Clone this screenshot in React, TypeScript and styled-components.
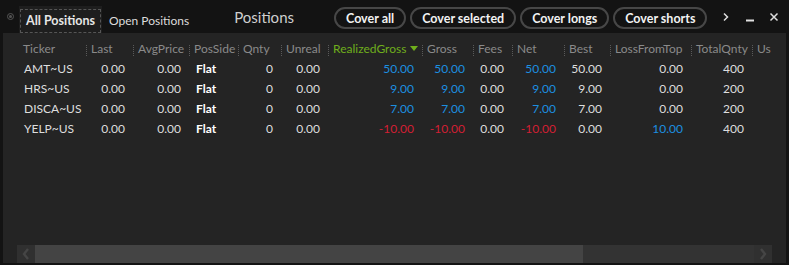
import styled, { createGlobalStyle } from 'styled-components';

const GlobalStyle = createGlobalStyle`
  html, body {
    margin: 0;
    padding: 0;
    background: #131313;
    overflow: hidden;
  }
  body {
    font-family: Lato, 'Liberation Sans', sans-serif;
  }
`;

const cols = [
  { key: 'ticker', label: 'Ticker', width: 69, align: 'left' },
  { key: 'last', label: 'Last', width: 47 },
  { key: 'avg', label: 'AvgPrice', width: 56 },
  { key: 'side', label: 'PosSide', width: 49, align: 'left' },
  { key: 'qnty', label: 'Qnty', width: 43 },
  { key: 'unreal', label: 'Unreal', width: 47 },
  { key: 'rg', label: 'RealizedGross', width: 94, sorted: true },
  { key: 'gross', label: 'Gross', width: 51 },
  { key: 'fees', label: 'Fees', width: 39 },
  { key: 'net', label: 'Net', width: 52 },
  { key: 'best', label: 'Best', width: 46 },
  { key: 'lft', label: 'LossFromTop', width: 81 },
  { key: 'tq', label: 'TotalQnty', width: 61 },
  { key: 'us', label: 'Us', width: 40 },
];

const rows = [
  { ticker: 'AMT~US', rg: '50.00', gross: '50.00', net: '50.00', best: '50.00', lft: '0.00', tq: '400' },
  { ticker: 'HRS~US', rg: '9.00', gross: '9.00', net: '9.00', best: '9.00', lft: '0.00', tq: '200' },
  { ticker: 'DISCA~US', rg: '7.00', gross: '7.00', net: '7.00', best: '7.00', lft: '0.00', tq: '200' },
  { ticker: 'YELP~US', rg: '-10.00', gross: '-10.00', net: '-10.00', best: '0.00', lft: '10.00', tq: '400' },
];

const gridTemplate = cols.map((c) => `${c.width}px`).join(' ');

function tone(v: string) {
  if (v.startsWith('-')) return 'neg';
  if (parseFloat(v) > 0) return 'pos';
  return 'plain';
}

export default function App() {
  return (
    <Window>
      <GlobalStyle />
      <TopBar>
        <Grip />
        <Tab $active>
          <TabLabel $active>All Positions</TabLabel>
        </Tab>
        <Tab>
          <TabLabel>Open Positions</TabLabel>
        </Tab>
        <Title>Positions</Title>
        <Buttons>
          <PillButton>Cover all</PillButton>
          <PillButton>Cover selected</PillButton>
          <PillButton>Cover longs</PillButton>
          <PillButton>Cover shorts</PillButton>
        </Buttons>
        <Controls>
          <Ctrl>
            <svg width="10" height="10" viewBox="0 0 10 10">
              <path d="M3 1.5 L6.5 5 L3 8.5" stroke="#ddd" strokeWidth="1.5" fill="none" />
            </svg>
          </Ctrl>
          <Ctrl>
            <svg width="10" height="10" viewBox="0 0 10 10">
              <rect x="1" y="7.5" width="8" height="2" fill="#e0e0e0" />
            </svg>
          </Ctrl>
          <Ctrl>
            <svg width="10" height="10" viewBox="0 0 10 10">
              <path d="M1.5 1.5 L8.5 8.5 M8.5 1.5 L1.5 8.5" stroke="#ddd" strokeWidth="1.5" />
            </svg>
          </Ctrl>
        </Controls>
      </TopBar>
      <Panel>
        <Table>
          <Row>
            {cols.map((c, i) => (
              <HeadCell key={c.key} $first={i === 0} $sorted={!!c.sorted}>
                {c.label}
                {c.sorted && (
                  <SortMark width="8" height="5" viewBox="0 0 8 5">
                    <path d="M0 0 H8 L4 5 Z" fill="#6fae1c" />
                  </SortMark>
                )}
              </HeadCell>
            ))}
          </Row>
          {rows.map((r) => {
            const vals: Record<string, string> = {
              ticker: r.ticker,
              last: '0.00',
              avg: '0.00',
              side: 'Flat',
              qnty: '0',
              unreal: '0.00',
              rg: r.rg,
              gross: r.gross,
              fees: '0.00',
              net: r.net,
              best: r.best,
              lft: r.lft,
              tq: r.tq,
              us: '',
            };
            return (
              <Row key={r.ticker}>
                {cols.map((c) => {
                  const v = vals[c.key];
                  const colored = ['rg', 'gross', 'net', 'lft'].includes(c.key);
                  return (
                    <Cell
                      key={c.key}
                      $align={c.align === 'left' ? 'left' : 'right'}
                      $tone={colored ? tone(v) : 'plain'}
                      $bold={c.key === 'side'}
                    >
                      {v}
                    </Cell>
                  );
                })}
              </Row>
            );
          })}
        </Table>
        <ScrollBar>
          <ScrollBtn>
            <svg width="8" height="12" viewBox="0 0 8 12">
              <path d="M6 1 L2 6 L6 11" stroke="#454545" strokeWidth="2.4" fill="none" />
            </svg>
          </ScrollBtn>
          <Thumb />
          <Track />
          <ScrollBtn>
            <svg width="8" height="12" viewBox="0 0 8 12">
              <path d="M2 1 L6 6 L2 11" stroke="#454545" strokeWidth="2.4" fill="none" />
            </svg>
          </ScrollBtn>
        </ScrollBar>
      </Panel>
    </Window>
  );
}

const Window = styled.div`
  width: 789px;
  height: 265px;
  background: #131313;
  display: flex;
  flex-direction: column;
  box-sizing: border-box;
  padding: 0 3px 2px 3px;
`;

const TopBar = styled.div`
  height: 33px;
  display: flex;
  align-items: flex-end;
  flex-shrink: 0;
  white-space: nowrap;
`;

const Grip = styled.div`
  width: 5px;
  height: 5px;
  border-radius: 50%;
  border: 1px solid #555;
  margin: 0 0 13px 4px;
  display: flex;
  align-items: center;
  justify-content: center;
  &::after {
    content: '';
    width: 3px;
    height: 3px;
    border-radius: 50%;
    background: #555;
  }
`;

const Tab = styled.div<{ $active?: boolean }>`
  height: 27px;
  display: flex;
  align-items: center;
  padding: 0 1px;
  margin-left: ${(p) => (p.$active ? '5px' : '0')};
  background: ${(p) => (p.$active ? '#1e1e1e' : 'transparent')};
`;

const TabLabel = styled.div<{ $active?: boolean }>`
  font-size: ${(p) => (p.$active ? '12.5px' : '12px')};
  font-weight: ${(p) => (p.$active ? 700 : 400)};
  color: ${(p) => (p.$active ? '#e6e6e6' : '#dcdcdc')};
  padding: 3px 5px 4px;
  border: 1px dashed ${(p) => (p.$active ? '#555' : 'transparent')};
  margin-top: 2px;
`;

const Title = styled.div`
  font-size: 15px;
  color: #cfcfcf;
  margin: 0 0 7px 38px;
`;

const Buttons = styled.div`
  display: flex;
  gap: 4px;
  margin: 0 0 4px 40px;
`;

const PillButton = styled.div`
  height: 18px;
  padding: 0 10px;
  border: 2px solid #474747;
  border-radius: 12px;
  font-size: 12.5px;
  font-weight: 700;
  color: #f2f2f2;
  display: flex;
  align-items: center;
`;

const Controls = styled.div`
  display: flex;
  align-items: center;
  margin: 0 0 11px 14px;
  gap: 14px;
`;

const Ctrl = styled.div`
  width: 10px;
  height: 10px;
  display: flex;
  align-items: center;
  justify-content: center;
`;

const Panel = styled.div`
  flex: 1;
  background: #242424;
  display: flex;
  flex-direction: column;
  overflow: hidden;
`;

const Table = styled.div`
  padding: 5px 0 0 14px;
  display: flex;
  flex-direction: column;
`;

const Row = styled.div`
  display: grid;
  grid-template-columns: ${gridTemplate};
  height: 20px;
  align-items: center;
`;

const HeadCell = styled.div<{ $first: boolean; $sorted: boolean }>`
  position: relative;
  font-size: 12px;
  color: ${(p) => (p.$sorted ? '#6fae1c' : '#8a8a8a')};
  padding-left: ${(p) => (p.$first ? '6px' : '5px')};
  white-space: nowrap;
  overflow: hidden;
  &::before {
    content: '';
    display: ${(p) => (p.$first ? 'none' : 'block')};
    position: absolute;
    left: 0;
    top: 4px;
    height: 11px;
    border-left: 1px dotted #5a5a5a;
  }
`;

const SortMark = styled.svg`
  margin-left: 4px;
  vertical-align: 2px;
`;

const toneColor = { pos: '#1c8fe0', neg: '#d21f33', plain: '#dedede' };

const Cell = styled.div<{ $align: 'left' | 'right'; $tone: 'pos' | 'neg' | 'plain'; $bold: boolean }>`
  font-size: 12px;
  text-align: ${(p) => p.$align};
  padding: ${(p) => (p.$align === 'left' ? '0 0 0 7px' : '0 8px 0 0')};
  color: ${(p) => (p.$bold ? '#ffffff' : toneColor[p.$tone])};
  font-weight: ${(p) => (p.$bold ? 700 : 400)};
  white-space: nowrap;
`;

const ScrollBar = styled.div`
  margin: auto 0 0 14px;
  width: 755px;
  height: 18px;
  display: flex;
`;

const ScrollBtn = styled.div`
  width: 18px;
  background: #303030;
  display: flex;
  align-items: center;
  justify-content: center;
`;

const Thumb = styled.div`
  width: 548px;
  background: #444444;
`;

const Track = styled.div`
  flex: 1;
  background: #333333;
`;
